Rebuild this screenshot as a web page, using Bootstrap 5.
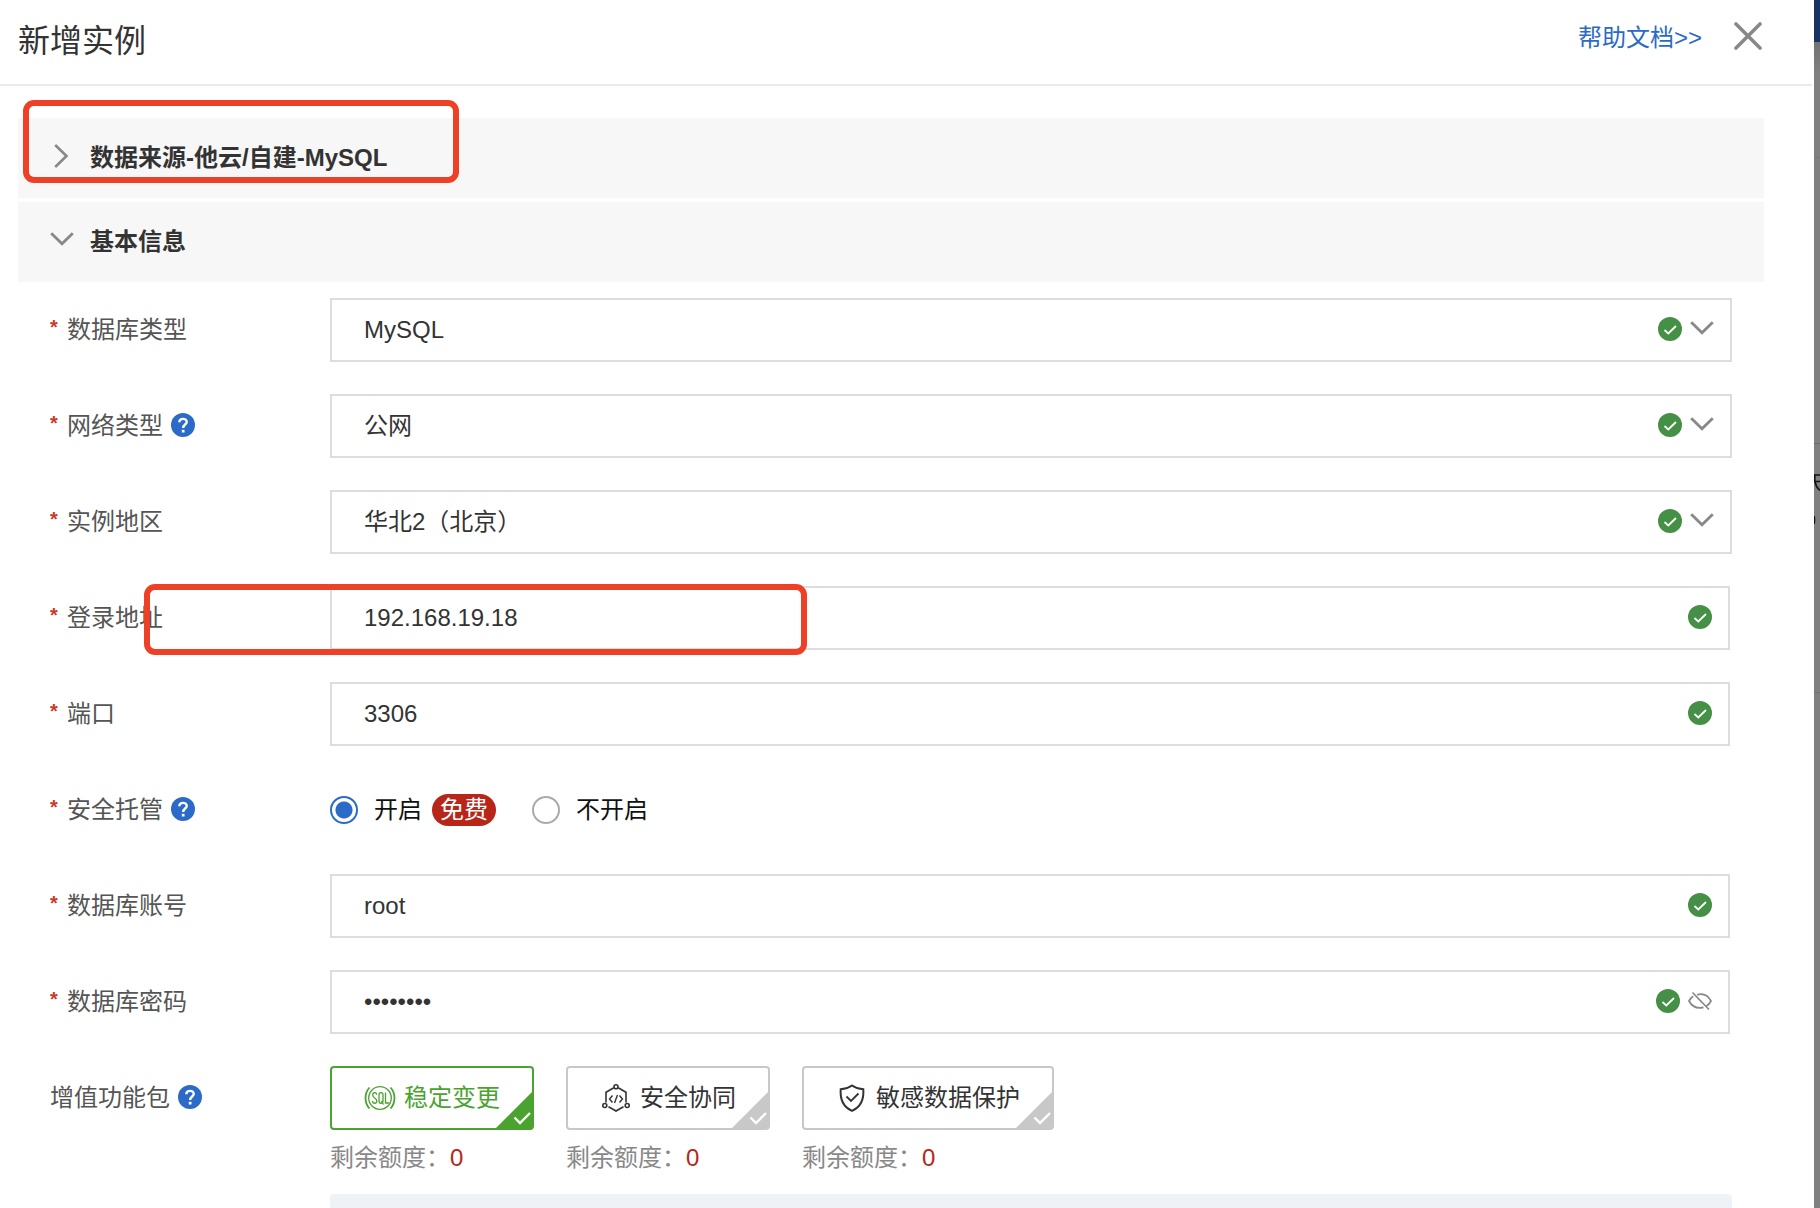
<!DOCTYPE html>
<html lang="zh-CN">
<head>
<meta charset="utf-8">
<meta name="viewport" content="width=device-width, initial-scale=1">
<title>新增实例</title>
<link href="https://cdn.jsdelivr.net/npm/bootstrap@5.3.0/dist/css/bootstrap.min.css" rel="stylesheet">
<style>
  body { font-family: "Liberation Sans", "Noto Sans CJK SC", sans-serif; font-size: 24px; line-height: 36px; color: #333; background: #808080; }
  .backdrop-page { width: 6px; background: #808080; }
  .backdrop-nav { height: 42px; background: #163560; }
  .backdrop-tabs { height: 116px; background: linear-gradient(#727272, #808080 30px); border-bottom: 1px solid #777; }
  .backdrop-panel { height: 286px; border-bottom: 1px solid #6c6c6c; }
  .backdrop-list { height: 249px; border-bottom: 1px solid #737373; padding-top: 22px; color: #111; }
  .drawer { background: #fff; min-width: 0; }
  .drawer-head { height: 86px; border-bottom: 2px solid #ebebeb; padding: 0 50px 2px 18px; margin-right: 2px; }
  .drawer-title { font-size: 32px; line-height: 48px; font-weight: 400; }
  .head-tools { padding-bottom: 6px; }
  .help-link { color: #2b6bc7; text-decoration: none; }
  .icon-btn { border: 0; padding: 0; background: none; line-height: 0; }
  .head-tools .icon-btn { margin-bottom: 4px; }
  .drawer-body { padding-top: 32px; }
  .sections { margin: 0 50px 0 18px; gap: 4px; }
  .section-head { height: 80px; width: 100%; padding: 0 32px; gap: 16px; border: 0; background: #f7f7f7; color: #333; font-weight: 700; text-align: left; }
  .section-head svg { margin-bottom: 4px; }
  .info-form { padding: 16px 82px 0 50px; gap: 32px; }
  .form-line { min-height: 64px; }
  .line-label { width: 280px; height: 64px; color: #555; gap: 8px; }
  .line-label svg { margin-bottom: 2px; }
  .need::before { content: "*"; color: #c83a2c; width: 9px; font-size: 20px; font-weight: 700; line-height: 32px; height: 38px; }
  .field { height: 64px; min-width: 0; }
  .field.typed { margin-right: 2px; }
  .field > .form-control, .field > .form-select { height: 64px; border: 2px solid #ddd; border-radius: 0; padding: 0 96px 0 32px; font-size: 24px; line-height: 36px; color: #333; background: #fff none; }
  .marks { right: 18px; top: 0; height: 62px; gap: 8px; pointer-events: none; }
  .marks .icon-btn { pointer-events: auto; }
  .choices { gap: 36px; }
  .choice { color: #111; }
  .choice .form-check-input { width: 28px; height: 28px; margin: 0; border: 2px solid #aaa; box-shadow: none; }
  .choice .form-check-input:checked { background: radial-gradient(circle, #2b6bc7 7px, #2b6bc7 8px, #fff 9px); border-color: #2b6bc7; }
  .choice label { padding-left: 16px; }
  .free-tag { font-size: 24px; line-height: 32px; font-weight: 400; padding: 0 8px; border-radius: 16px; background: #b8261a; margin-left: 10px; }
  .packs { gap: 32px; }
  .pack-btn { height: 64px; border: 2px solid #c8c8c8; border-radius: 4px; padding: 0 32px; gap: 8px; background: #fff; color: #333; }
  .pack-btn.chosen { border-color: #4aa32f; color: #4aa32f; }
  .corner { right: 0; bottom: 0; color: #c8c8c8; }
  .chosen .corner { color: #4aa32f; }
  .quota { margin-top: 10px; color: #888; }
  .quota b { font-weight: 400; color: #b8261a; }
  .notice { margin-top: 18px; height: 120px; border-radius: 4px; background: #eff3f8; }
  .outline { border: 6px solid #ed4026; border-radius: 11px; pointer-events: none; z-index: 2; }
  .outline-source { left: 5px; top: -18px; width: 436px; height: 83px; }
  .outline-host { left: 94px; top: -2px; width: 663px; height: 71px; }
</style>
</head>
<body class="d-flex vh-100 overflow-hidden">
<svg width="0" height="0" class="position-absolute" aria-hidden="true">
  <symbol id="ok" viewBox="0 0 24 24"><circle cx="12" cy="12" r="12" fill="#468f47"/><path d="M6.5 13l3.8 3.4L18 9" fill="none" stroke="#fff" stroke-width="1.8"/></symbol>
  <symbol id="down" viewBox="0 0 24 24"><path d="M1.2 5.2L12 15.800L22.800 5.200" fill="none" stroke="#888" stroke-width="2.800"/></symbol>
  <symbol id="right" viewBox="0 0 24 24"><path d="M5.200 1L16.500 12L5.200 23" fill="none" stroke="#888" stroke-width="2.600"/></symbol>
  <symbol id="ask" viewBox="0 0 24 24"><circle cx="12" cy="12" r="12" fill="#2b6bc7"/><path d="M8.300 9.300C8.400 4.700 15.900 4.800 15.700 9.100C15.600 11.500 12.200 11.600 12.200 14.900" fill="none" stroke="#fff" stroke-width="2.400"/><rect x="10.800" y="16.800" width="2.700" height="2.700" fill="#fff"/></symbol>
  <symbol id="corner" viewBox="0 0 36 36"><path d="M36 0V36H0Z" fill="currentColor"/><path d="M18.500 25.500L24 31L34 21" fill="none" stroke="#fff" stroke-width="2.400"/></symbol>
</svg>

<main class="drawer flex-grow-1 overflow-hidden">
  <header class="drawer-head d-flex align-items-center justify-content-between">
    <h1 class="drawer-title mb-0">新增实例</h1>
    <div class="head-tools d-flex align-items-center gap-4">
      <a class="help-link me-2" href="#help">帮助文档&gt;&gt;</a>
      <button class="icon-btn" type="button" aria-label="关闭"><svg width="28" height="28" viewBox="0 0 28 28"><path d="M2 2L26 26M26 2L2 26" stroke="#888" stroke-width="3.600" stroke-linecap="round"/></svg></button>
    </div>
  </header>

  <div class="drawer-body">
    <div class="sections d-flex flex-column">
      <div class="position-relative">
        <button class="section-head d-flex align-items-center" type="button" aria-expanded="false"><svg width="24" height="24"><use href="#right"/></svg><span>数据来源-他云/自建-MySQL</span></button>
        <div class="outline outline-source position-absolute"></div>
      </div>
      <button class="section-head d-flex align-items-center" type="button" aria-expanded="true"><svg width="24" height="24"><use href="#down"/></svg><span>基本信息</span></button>
    </div>

    <form class="info-form d-flex flex-column">
      <div class="form-line d-flex">
        <label class="line-label need d-flex align-items-center" for="dbtype">数据库类型</label>
        <div class="field position-relative flex-grow-1"><select class="form-select" id="dbtype"><option>MySQL</option></select>
          <div class="marks position-absolute d-flex align-items-center"><svg width="24" height="24"><use href="#ok"/></svg><svg width="24" height="24"><use href="#down"/></svg></div></div>
      </div>
      <div class="form-line d-flex">
        <div class="line-label need d-flex align-items-center"><label for="net">网络类型</label><svg width="24" height="24"><use href="#ask"/></svg></div>
        <div class="field position-relative flex-grow-1"><select class="form-select" id="net"><option>公网</option></select>
          <div class="marks position-absolute d-flex align-items-center"><svg width="24" height="24"><use href="#ok"/></svg><svg width="24" height="24"><use href="#down"/></svg></div></div>
      </div>
      <div class="form-line d-flex">
        <label class="line-label need d-flex align-items-center" for="region">实例地区</label>
        <div class="field position-relative flex-grow-1"><select class="form-select" id="region"><option>华北2（北京）</option></select>
          <div class="marks position-absolute d-flex align-items-center"><svg width="24" height="24"><use href="#ok"/></svg><svg width="24" height="24"><use href="#down"/></svg></div></div>
      </div>
      <div class="form-line d-flex position-relative">
        <label class="line-label need d-flex align-items-center" for="host">登录地址</label>
        <div class="field typed position-relative flex-grow-1"><input class="form-control" id="host" type="text" value="192.168.19.18">
          <div class="marks position-absolute d-flex align-items-center"><svg width="24" height="24"><use href="#ok"/></svg></div></div>
        <div class="outline outline-host position-absolute"></div>
      </div>
      <div class="form-line d-flex">
        <label class="line-label need d-flex align-items-center" for="port">端口</label>
        <div class="field typed position-relative flex-grow-1"><input class="form-control" id="port" type="text" value="3306">
          <div class="marks position-absolute d-flex align-items-center"><svg width="24" height="24"><use href="#ok"/></svg></div></div>
      </div>
      <div class="form-line d-flex" role="radiogroup" aria-labelledby="hosting-label">
        <div class="line-label need d-flex align-items-center"><span id="hosting-label">安全托管</span><svg width="24" height="24"><use href="#ask"/></svg></div>
        <div class="choices d-flex align-items-center">
          <div class="choice d-flex align-items-center"><input class="form-check-input" type="radio" name="hosting" id="on" checked><label for="on">开启</label><span class="badge free-tag">免费</span></div>
          <div class="choice d-flex align-items-center"><input class="form-check-input" type="radio" name="hosting" id="off"><label for="off">不开启</label></div>
        </div>
      </div>
      <div class="form-line d-flex">
        <label class="line-label need d-flex align-items-center" for="account">数据库账号</label>
        <div class="field typed position-relative flex-grow-1"><input class="form-control" id="account" type="text" value="root">
          <div class="marks position-absolute d-flex align-items-center"><svg width="24" height="24"><use href="#ok"/></svg></div></div>
      </div>
      <div class="form-line d-flex">
        <label class="line-label need d-flex align-items-center" for="secret">数据库密码</label>
        <div class="field typed position-relative flex-grow-1"><input class="form-control" id="secret" type="password" value="password">
          <div class="marks position-absolute d-flex align-items-center"><svg width="24" height="24"><use href="#ok"/></svg>
            <button class="icon-btn" type="button" aria-label="显示密码"><svg width="24" height="24" viewBox="0 0 24 24" fill="none" stroke="#888" stroke-width="1.700"><path d="M9 5.700C15 4 20 6.500 23 12C21.800 14.200 20.300 16 18.500 17M15.500 18.400C9 20 4 17.500 1 12C2.200 9.800 3.500 8.200 5.300 7.200M4.500 3.500L21 20.500"/><path d="M10 9.500L14 13.500" stroke-width="1"/></svg></button></div></div>
      </div>
      <div class="form-line d-flex">
        <div class="line-label d-flex align-items-center"><span>增值功能包</span><svg width="24" height="24"><use href="#ask"/></svg></div>
        <div class="flex-grow-1">
          <div class="packs d-flex">
            <div>
              <button class="pack-btn chosen position-relative d-flex align-items-center" type="button" aria-pressed="true">
                <svg width="32" height="24" viewBox="0 0 32 24" fill="none" stroke="currentColor" stroke-width="1.300"><circle cx="16" cy="12" r="11.300"/><path d="M5.500 1.500C.2 7 .2 17 5.500 22.500M26.500 1.500C31.800 7 31.800 17 26.500 22.500" stroke-width="1.800"/><path d="M12.700 8.800C12.500 5.800 8.700 6 8.700 9C8.700 12 12.800 12 12.800 15C12.800 18 8.600 18 8.500 15M15 9C15 5.800 19 5.800 19 9V15C19 18 15 18 15 15ZM17.500 15L19.500 18.500M21.500 6.500V17H25"/></svg>
                <span>稳定变更</span><svg class="corner position-absolute" width="36" height="36"><use href="#corner"/></svg></button>
              <div class="quota">剩余额度：<b>0</b></div>
            </div>
            <div>
              <button class="pack-btn position-relative d-flex align-items-center" type="button" aria-pressed="false">
                <svg width="32" height="28" viewBox="0 0 32 28" fill="none" stroke="currentColor" stroke-width="1.600"><path d="M13.800 3.800L6 8.200V18.500M18.200 3.800L26 8.200V18.500M8.500 22.800L16 27L23.500 22.800"/><circle cx="16" cy="2.800" r="2"/><circle cx="4.800" cy="21.500" r="2"/><circle cx="27.200" cy="21.500" r="2"/><path d="M12.500 11.500L9.500 15L12.500 18.500M19.500 11.500L22.500 15L19.500 18.500M17.500 11L14.500 19" stroke-width="1.400"/></svg>
                <span>安全协同</span><svg class="corner position-absolute" width="36" height="36"><use href="#corner"/></svg></button>
              <div class="quota">剩余额度：<b>0</b></div>
            </div>
            <div>
              <button class="pack-btn position-relative d-flex align-items-center" type="button" aria-pressed="false">
                <svg width="32" height="28" viewBox="0 0 32 28" fill="none" stroke="currentColor" stroke-width="2"><path d="M16 1.500C19.500 4 23.500 5 27.300 5.300C28 15 25 23 16 26.800C7 23 4 15 4.700 5.300C8.500 5 12.500 4 16 1.500Z"/><path d="M10.500 12.500L15 17L22.500 9.500" stroke-width="1.800"/></svg>
                <span>敏感数据保护</span><svg class="corner position-absolute" width="36" height="36"><use href="#corner"/></svg></button>
              <div class="quota">剩余额度：<b>0</b></div>
            </div>
          </div>
          <div class="notice"></div>
        </div>
      </div>
    </form>
  </div>
</main>

<aside class="backdrop-page flex-shrink-0 overflow-hidden" aria-hidden="true">
  <div class="backdrop-nav"></div>
  <div class="backdrop-tabs"></div>
  <div class="backdrop-panel"></div>
  <div class="backdrop-list"><svg class="d-block" width="6" height="60" viewBox="0 0 6 60" fill="none" stroke="#111" stroke-width="1.600"><path d="M0 9H6M0 15.500H6M.8 9V15C1.500 19 3 22 6 24.500"/><path d="M0 50Q1 54 0 58"/></svg></div>
</aside>
<script src="https://cdn.jsdelivr.net/npm/bootstrap@5.3.0/dist/js/bootstrap.bundle.min.js"></script>
</body>
</html>
